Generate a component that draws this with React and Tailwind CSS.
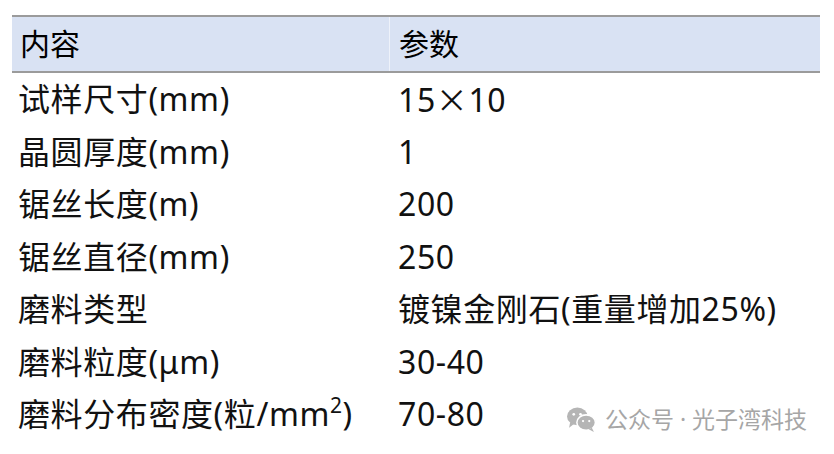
import React from "react";

const cjk = { fontFamily: '"Noto Sans CJK SC", sans-serif' };

const rows = [
  ["试样尺寸(mm)", <>15<span style={cjk}>×</span>10</>],
  ["晶圆厚度(mm)", "1"],
  ["锯丝长度(m)", "200"],
  ["锯丝直径(mm)", "250"],
  ["磨料类型", "镀镍金刚石(重量增加25%)"],
  ["磨料粒度(μm)", "30-40"],
  [
    <>
      磨料分布密度(粒/mm<sup className="text-[21px] -top-[0.65em]">2</sup>)
    </>,
    "70-80",
  ],
];

const WeChat = () => (
  <svg width="31" height="27" viewBox="0 0 30 26">
    <ellipse cx="11" cy="10" rx="10" ry="8.5" fill="#b5b5b5" />
    <path d="M4 16 L3 21 L8 17 Z" fill="#b5b5b5" />
    <ellipse cx="19.5" cy="16" rx="9" ry="7.5" fill="#b5b5b5" stroke="#fff" strokeWidth="1.5" />
    <path d="M25 21 L27 25 L22 22.5 Z" fill="#b5b5b5" />
    <circle cx="7.5" cy="8" r="1.3" fill="#fff" />
    <circle cx="14" cy="8" r="1.3" fill="#fff" />
    <circle cx="16.5" cy="14.5" r="1.1" fill="#fff" />
    <circle cx="22.5" cy="14.5" r="1.1" fill="#fff" />
  </svg>
);

export default function App() {
  return (
    <div
      className="w-[834px] h-[454px] bg-white pt-[15px] pl-[12px]"
      style={{ fontFamily: '"Noto Sans", "Noto Sans CJK SC", sans-serif' }}
    >
      <div className="w-[808px] relative">
        <div className="flex h-[58px] bg-[#d9e2f3] border-t-2 border-b-2 border-[#9b9b9b] text-[30px] text-black leading-none">
          <div className="w-[377px] flex items-center pl-[8px]">内容</div>
          <div className="w-px bg-[#eef2fa]" />
          <div className="flex-1 flex items-center pl-[9px]">参数</div>
        </div>
        {rows.map((r, i) => (
          <div key={i} className="flex h-[52.5px] items-center text-[32px] tracking-[0.6px] text-[#111] leading-none">
            <div className="w-[377px] pl-[6px] whitespace-nowrap">{r[0]}</div>
            <div className="flex-1 pl-[9px] whitespace-nowrap">{r[1]}</div>
          </div>
        ))}
        <div className="absolute left-[554px] top-[391px] flex items-center gap-[8px] text-[23px] text-[#a6a6a6] leading-none">
          <WeChat />
          <span>公众号 · 光子湾科技</span>
        </div>
      </div>
    </div>
  );
}
